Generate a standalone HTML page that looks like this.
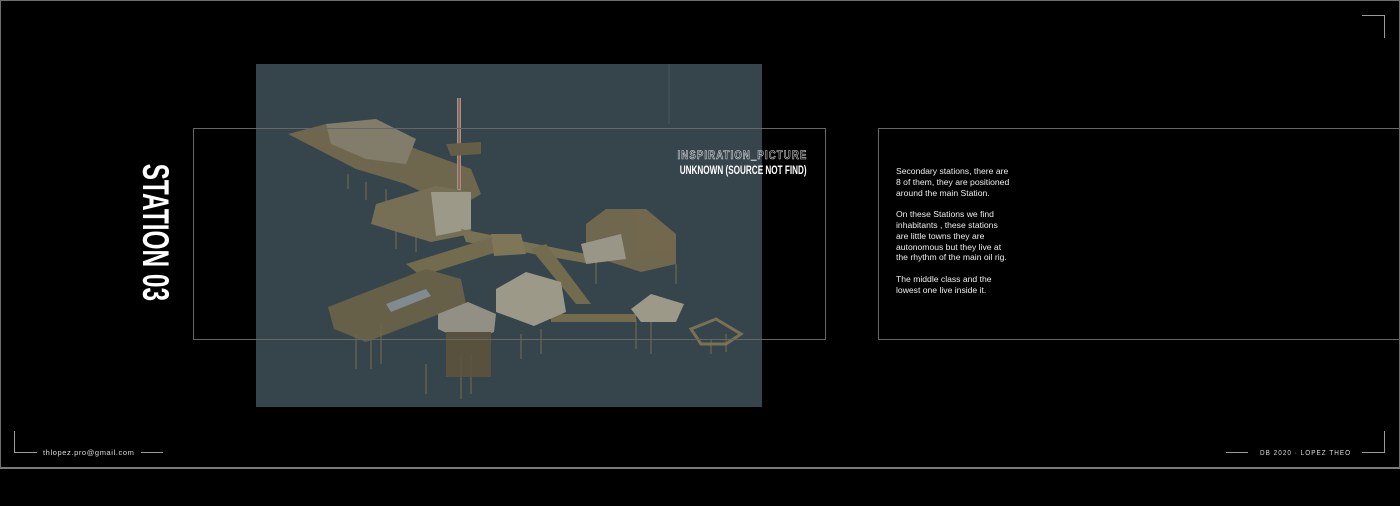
<!DOCTYPE html>
<html><head><meta charset="utf-8"><style>
html,body{margin:0;padding:0;background:#000;}
body{width:1400px;height:506px;position:relative;overflow:hidden;font-family:"Liberation Sans",sans-serif;}
.abs{position:absolute;}
.ln{position:absolute;background:#9a9a9a;}
.box{position:absolute;border:1px solid #5a5a5a;box-sizing:border-box;}
.body p{margin:0 0 10.8px 0;}
</style></head><body>
<div class="abs" style="left:0;top:0;width:1400px;height:469px;border:1px solid #6e6e6e;border-bottom:2px solid #7a7a7a;box-sizing:border-box;"></div>

<svg class="abs" style="left:256px;top:64px" width="506" height="343" viewBox="0 0 506 343">
<rect width="506" height="343" fill="#36444c"/>
<g stroke="#7a7050" stroke-width="1.2" fill="none" opacity="0.8">
<path d="M92 110v15M110 118v18M130 125v12M140 165v20M160 170v18M100 270v35M115 275v30M125 260v40M205 290v45M215 290v40M170 300v30M265 270v25M285 265v25M380 255v30M395 255v35M340 195v25M420 200v20M455 275v15M470 270v18"/>
</g>
<g opacity="0.85">
<polygon points="32,70 70,60 110,62 160,85 215,105 225,130 200,145 150,120 100,105" fill="#7a6e4e"/>
<polygon points="70,60 120,55 160,75 150,100 110,95 75,80" fill="#908870"/>
<rect x="201" y="34" width="4" height="95" fill="#b0a496"/>
<line x1="203" y1="34" x2="203" y2="125" stroke="#a04a3a" stroke-width="1.2"/>
<polygon points="190,80 225,78 225,90 195,92" fill="#6e6346"/>
<polygon points="120,140 180,122 215,128 215,170 175,178 115,160" fill="#827758"/>
<polygon points="175,128 215,128 215,165 180,172" fill="#aea894"/>
<polygon points="205,165 330,190 335,200 210,178" fill="#857955"/>
<polygon points="150,200 240,172 260,182 165,212" fill="#7d724e"/>
<polygon points="275,185 320,240 335,240 290,180" fill="#7d724e"/>
<polygon points="295,250 380,250 380,258 295,258" fill="#7d724e"/>
<polygon points="235,170 265,170 270,190 238,192" fill="#8c7e5a"/>
<polygon points="330,160 350,145 390,145 420,170 420,200 385,208 330,190" fill="#7b6f4f"/>
<polygon points="325,180 365,170 370,195 330,200" fill="#aca592"/>
<polygon points="72,243 170,205 205,215 210,240 110,278 78,265" fill="#706548"/>
<polygon points="130,240 170,225 175,232 135,248" fill="#8e979c"/>
<polygon points="182,250 212,238 240,250 238,268 210,278 182,265" fill="#a39e90"/>
<rect x="190" y="268" width="45" height="45" fill="#5e543c"/>
<polygon points="240,225 270,208 305,218 310,248 278,262 240,248" fill="#aea894"/>
<polygon points="375,245 395,230 428,240 420,258 385,258" fill="#aea894"/>
<polygon points="435,265 460,255 485,270 470,280 445,280" fill="none" stroke="#857955" stroke-width="3"/>
</g>
<line x1="413" y1="0" x2="413" y2="60" stroke="#5a6a72" stroke-width="0.6"/>
</svg>

<div class="box" style="left:193px;top:128px;width:633px;height:212px;border-color:#666;"></div>
<div class="box" style="left:878px;top:128px;width:530px;height:212px;border-color:#666;"></div>

<div class="abs" style="left:155px;top:223px;width:0;height:0;">
<div style="position:absolute;left:-90px;top:-18px;width:180px;text-align:center;transform:rotate(90deg) scaleX(0.66);transform-origin:center;font-weight:bold;font-size:37px;color:#fff;line-height:36px;white-space:nowrap;">STATION 03</div>
</div>

<div class="abs" style="right:593px;top:148px;text-align:right;color:transparent;-webkit-text-stroke:0.6px #ddd;font-weight:bold;font-size:12px;letter-spacing:1.4px;white-space:nowrap;transform:scaleX(0.8);transform-origin:right;">INSPIRATION_PICTURE</div>
<div class="abs" style="right:593px;top:163px;text-align:right;color:#fff;font-weight:bold;font-size:12px;white-space:nowrap;transform:scaleX(0.68);transform-origin:right;">UNKNOWN (SOURCE NOT FIND)</div>

<div class="abs body" style="left:896px;top:166px;width:140px;color:#eee;font-size:8.6px;line-height:10.8px;white-space:nowrap;">
<p>Secondary stations, there are<br>8 of them, they are positioned<br>around the main Station.</p>
<p>On these Stations we find<br>inhabitants , these stations<br>are little towns they are<br>autonomous but they live at<br>the rhythm of the main oil rig.</p>
<p>The middle class and the<br>lowest one live inside it.</p>
</div>

<div class="ln" style="left:1362px;top:15px;width:23px;height:1px;"></div>
<div class="ln" style="left:1384px;top:15px;width:1px;height:23px;"></div>
<div class="ln" style="left:14px;top:431px;width:1px;height:22px;"></div>
<div class="ln" style="left:14px;top:452px;width:23px;height:1px;"></div>
<div class="ln" style="left:1384px;top:431px;width:1px;height:22px;"></div>
<div class="ln" style="left:1362px;top:452px;width:23px;height:1px;"></div>

<div class="abs" style="left:43px;top:447px;color:#ddd;font-size:7.5px;letter-spacing:0.6px;white-space:nowrap;line-height:12px;">thlopez.pro@gmail.com</div>
<div class="ln" style="left:141px;top:452px;width:22px;height:1px;"></div>
<div class="ln" style="left:1226px;top:452px;width:22px;height:1px;"></div>
<div class="abs" style="left:1260px;top:447px;color:#ddd;font-size:7.5px;letter-spacing:1.2px;white-space:nowrap;line-height:12px;transform:scaleX(0.85);transform-origin:left;">DB 2020 · LOPEZ THEO</div>
</body></html>
